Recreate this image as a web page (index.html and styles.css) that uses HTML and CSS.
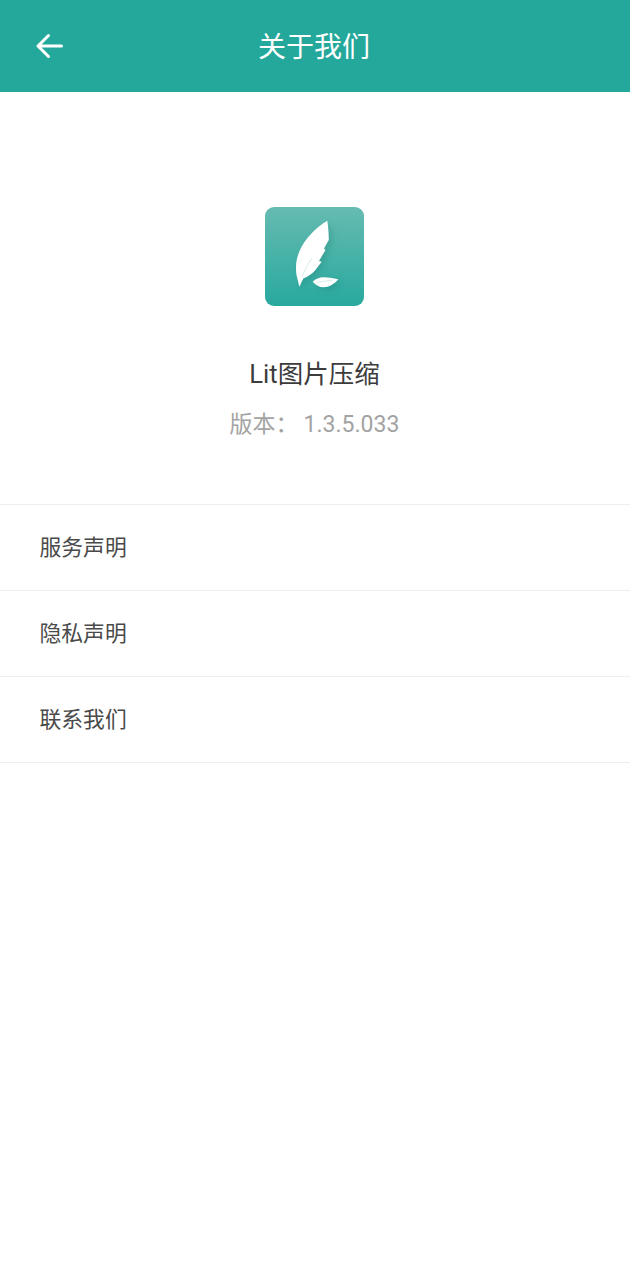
FILE: index.html
```html
<!DOCTYPE html>
<html lang="zh-CN">
<head>
<meta charset="utf-8">
<title>关于我们</title>
<link rel="stylesheet" href="styles.css">
</head>
<body>
<header class="topbar">
  <svg class="back" width="30" height="30" viewBox="0 0 30 30" aria-hidden="true">
    <path d="M26.500 15H3M13.500 4.500L3 15L13.500 25.500" fill="none" stroke="#fff" stroke-width="3" stroke-linecap="round" stroke-linejoin="round"/>
  </svg>
  <h1 class="title">关于我们</h1>
</header>
<section class="about">
  <div class="logo">
    <svg width="99" height="99" viewBox="0 0 99 99" aria-hidden="true">
      <defs>
        <linearGradient id="tile" x1="0" y1="0" x2="0" y2="1">
          <stop offset="0" stop-color="#66bbb1"/>
          <stop offset="1" stop-color="#28a99e"/>
        </linearGradient>
      </defs>
      <rect width="99" height="99" rx="9" fill="url(#tile)"/>
      <g class="quill">
        <path d="M62.300 13.700C57 17 51.500 21 46.700 26.300C41 32 37.500 37.500 35 43C32.500 48.500 31 54 31 59.700C31 64 31.300 68 32.300 71.300L34.300 79.700L38.300 71.500C43 69.500 47 67 50 63.500L56.700 54.700L54 54L60.500 43L59 41.500L63.800 33C63.800 26 63.200 20 62.300 13.700Z" fill="#fff"/>
        <path d="M37 70C39.500 63.500 43 57 46.700 51.300" fill="none" stroke="#c2e4df" stroke-width="0.7"/>
        <path d="M47.700 74.700C50.500 72 54.500 70.300 58.300 70.300C63 70.300 68 71 73.300 72.300C69.500 77 64 80.300 58.300 80.300C54.500 80.300 50.500 78 47.700 74.700Z" fill="#fff"/>
        <path d="M52 75.500C57 74.500 62 74 68 73" fill="none" stroke="#c2e4df" stroke-width="0.7"/>
      </g>
    </svg>
  </div>
  <h2 class="app-name">Lit图片压缩</h2>
  <p class="version"><span>版本：</span><span>1.3.5.033</span></p>
</section>
<nav class="links">
  <a class="link">服务声明</a>
  <a class="link">隐私声明</a>
  <a class="link">联系我们</a>
</nav>
</body>
</html>
```
FILE: styles.css
```css
* { box-sizing: border-box; }

html, body {
  margin: 0;
  background: #fff;
  font-family: Roboto, "Noto Sans CJK SC", sans-serif;
}

.topbar {
  position: relative;
  height: 92px;
  background: #23a89b;
  display: flex;
  justify-content: center;
  padding: 4px 2px 0 0;
}

.back {
  position: absolute;
  left: 35px;
  top: 31px;
}

.title {
  margin: 0;
  color: #fff;
  font-size: 28px;
  font-weight: 400;
  line-height: 88px;
}

.about {
  display: flex;
  flex-direction: column;
  align-items: center;
  padding: 115px 2px 0 0;
  height: 412px;
}

.logo {
  width: 99px;
  height: 99px;
  line-height: 0;
}

.quill {
  filter: drop-shadow(3px 3px 3px rgba(0, 90, 80, 0.18));
}

.app-name {
  margin: 50px 0 0;
  padding-left: 1px;
  color: #3c3c3c;
  font-size: 25.5px;
  font-weight: 400;
  line-height: 36px;
}

.version {
  margin: 15px 0 0;
  padding-left: 1px;
  display: flex;
  gap: 5px;
  color: #a3a3a3;
  font-size: 23px;
  line-height: 36px;
}

.links {
  display: flex;
  flex-direction: column;
  border-top: 1px solid #eee;
}

.link {
  height: 86px;
  padding: 0 0 4px 39.5px;
  display: flex;
  align-items: center;
  color: #4a4a4a;
  font-size: 21.8px;
  border-bottom: 1px solid #eee;
}
```
